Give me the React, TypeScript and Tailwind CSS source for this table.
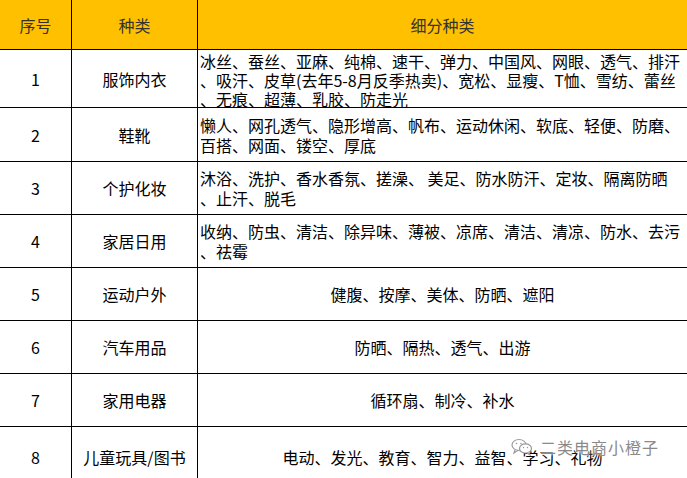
import React from "react";

type Row = {
  no: string;
  kind: string;
  lines: string[];
  center?: boolean;
  h: string;
  tight?: boolean;
};

const rows: Row[] = [
  {
    no: "1",
    kind: "服饰内衣",
    lines: [
      "冰丝、蚕丝、亚麻、纯棉、速干、弹力、中国风、网眼、透气、排汗",
      "、吸汗、皮草(去年5-8月反季热卖)、宽松、显瘦、T恤、雪纺、蕾丝",
      "、无痕、超薄、乳胶、防走光",
    ],
    h: "h-[58px]",
    tight: true,
  },
  {
    no: "2",
    kind: "鞋靴",
    lines: ["懒人、网孔透气、隐形增高、帆布、运动休闲、软底、轻便、防磨、", "百搭、网面、镂空、厚底"],
    h: "h-[54px]",
  },
  {
    no: "3",
    kind: "个护化妆",
    lines: ["沐浴、洗护、香水香氛、搓澡、 美足、防水防汗、定妆、隔离防晒", "、止汗、脱毛"],
    h: "h-[53px]",
  },
  {
    no: "4",
    kind: "家居日用",
    lines: ["收纳、防虫、清洁、除异味、薄被、凉席、清洁、清凉、防水、去污", "、祛霉"],
    h: "h-[53px]",
  },
  { no: "5", kind: "运动户外", lines: ["健腹、按摩、美体、防晒、遮阳"], center: true, h: "h-[53px]" },
  { no: "6", kind: "汽车用品", lines: ["防晒、隔热、透气、出游"], center: true, h: "h-[53px]" },
  { no: "7", kind: "家用电器", lines: ["循环扇、制冷、补水"], center: true, h: "h-[53px]" },
  {
    no: "8",
    kind: "儿童玩具/图书",
    lines: ["电动、发光、教育、智力、益智、学习、礼物"],
    center: true,
    h: "h-[60px]",
  },
];

function WeChatIcon() {
  return (
    <svg width="22" height="18" viewBox="0 0 22 18" fill="none" stroke="#9a9a9a" strokeWidth="1.2">
      <ellipse cx="8" cy="7" rx="7" ry="5.5" fill="#ffffff" />
      <path d="M4 12 L3 15 L7 12.3" fill="#ffffff" />
      <ellipse cx="14.5" cy="10.5" rx="6" ry="4.6" fill="#ffffff" />
      <path d="M18 14.5 L19 17 L16 15" fill="#ffffff" />
      <circle cx="5.5" cy="5.5" r="0.8" fill="#9a9a9a" stroke="none" />
      <circle cx="10" cy="5.5" r="0.8" fill="#9a9a9a" stroke="none" />
      <circle cx="12.5" cy="9.5" r="0.7" fill="#9a9a9a" stroke="none" />
      <circle cx="16.5" cy="9.5" r="0.7" fill="#9a9a9a" stroke="none" />
    </svg>
  );
}

export default function App() {
  return (
    <div
      className="relative w-[687px] h-[478px] overflow-hidden bg-white text-black text-[16px] leading-[20px]"
      style={{ fontFamily: '"Noto Sans CJK SC", "Noto Sans", sans-serif' }}
    >
      {/* header */}
      <div className="grid grid-cols-[72px_126px_1fr] h-[50px] bg-[#ffc000] text-[#333333] border-b border-black">
        <div className="flex items-center justify-center border-r border-black">序号</div>
        <div className="flex items-center justify-center border-r border-black">种类</div>
        <div className="flex items-center justify-center">细分种类</div>
      </div>

      {rows.map((r) => (
        <div key={r.no} className={`grid grid-cols-[72px_126px_1fr] border-b border-black ${r.h}`}>
          <div className="flex items-center justify-center border-r border-black">{r.no}</div>
          <div className="flex items-center justify-center border-r border-black whitespace-nowrap">{r.kind}</div>
          <div
            className={`flex flex-col overflow-hidden px-[2px] ${r.center ? "items-center" : "items-start"} ${
              r.tight ? "justify-start pt-[2px] leading-[19px]" : "justify-center"
            }`}
          >
            {r.lines.map((l, i) => (
              <div key={i} className="whitespace-pre">
                {l}
              </div>
            ))}
          </div>
        </div>
      ))}

      {/* watermark */}
      <div className="absolute left-[511px] top-[437px] flex items-center gap-[7px]">
        <WeChatIcon />
        <span className="text-[#8a8a8a] tracking-[1px] [text-shadow:0_0_2px_#fff,0_0_3px_#fff]">二类电商小橙子</span>
      </div>
    </div>
  );
}
